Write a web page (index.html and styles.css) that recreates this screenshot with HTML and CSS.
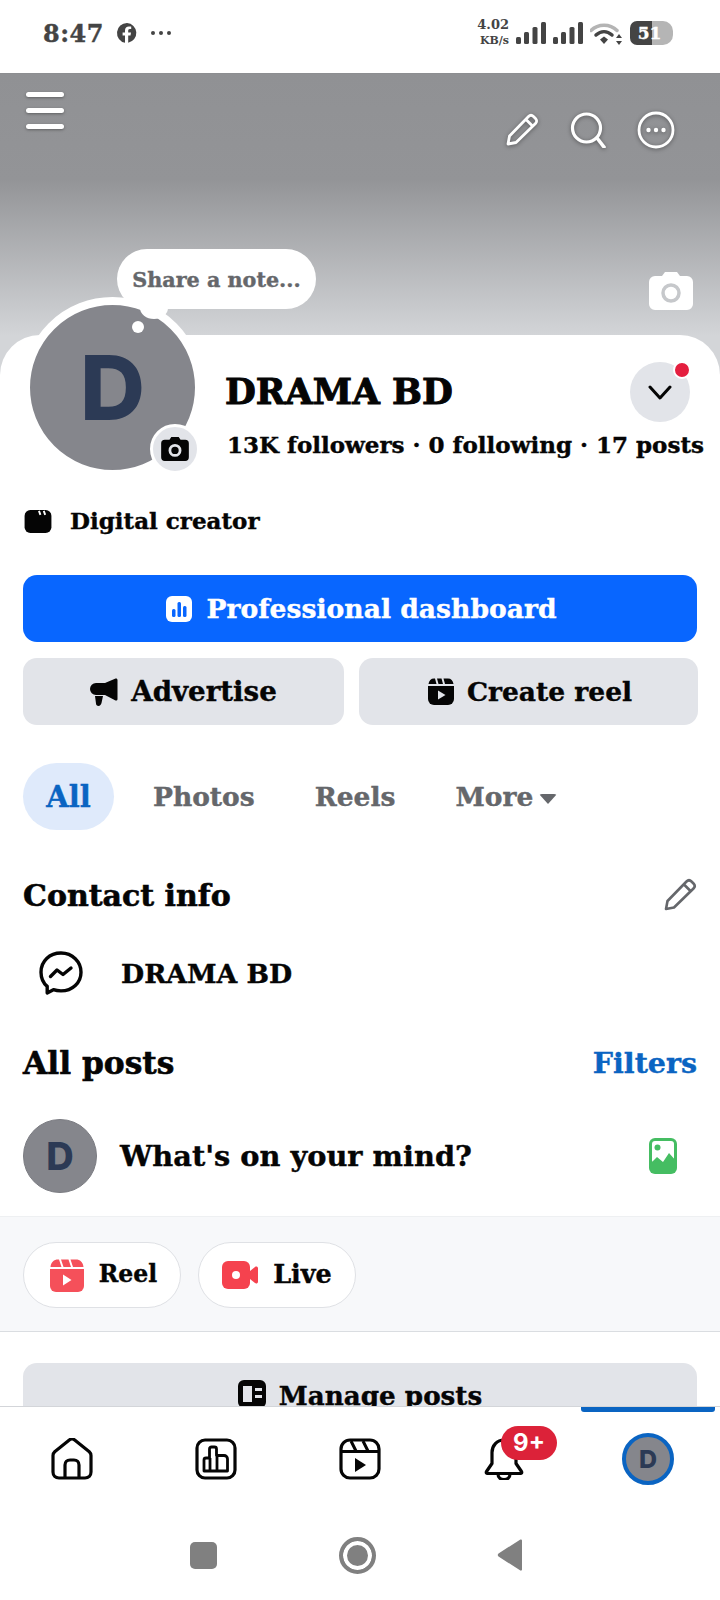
FILE: index.html
```html
<!DOCTYPE html>
<html lang="en">
<head>
  <meta charset="UTF-8">
  <title>DRAMA BD</title>
  <link rel="stylesheet" href="styles.css">
</head>
<body>
  <div class="phone">

    <!-- Status bar -->
    <div class="status">
      <div class="status-left">
        <span class="clock">8:47</span>
        <svg class="fb-mini" viewBox="0 0 22 22"><path fill="#444" fill-rule="evenodd" d="M11 1a10 10 0 0 0-2 19.8V13.6H6.6v-3H9V8.400c0-2.700 1.500-4 3.900-4l2.300.2v2.500h-1.300c-1.300 0-1.700.8-1.700 1.600v1.900h2.800l-.5 3h-2.300v7.200A10 10 0 0 0 11 1z"/></svg>
        <span class="status-dots"><i></i><i></i><i></i></span>
      </div>
      <div class="status-right">
        <div class="speed"><span>4.02</span><span class="speed-unit">KB/s</span></div>
        <svg class="signal" viewBox="0 0 30 24"><g fill="#444"><rect x="0" y="16" width="5" height="7" rx="1.500"/><rect x="8" y="11" width="5" height="12" rx="1.500"/><rect x="16.500" y="6" width="5" height="17" rx="1.500"/><rect x="25" y="1" width="5" height="22" rx="1.500"/></g></svg>
        <svg class="signal" viewBox="0 0 30 24"><g fill="#444"><rect x="0" y="16" width="5" height="7" rx="1.500"/><rect x="8" y="11" width="5" height="12" rx="1.500"/><rect x="16.500" y="6" width="5" height="17" rx="1.500"/><rect x="25" y="1" width="5" height="22" rx="1.500"/></g></svg>
        <svg class="wifi" viewBox="0 0 32 24">
          <path d="M1 9.500C8 2.500 20 2.500 27 9.500" fill="none" stroke="#b4b4b4" stroke-width="3.500" stroke-linecap="round"/>
          <path d="M6 14c5-4.500 11-4.500 16 0" fill="none" stroke="#444" stroke-width="3.500" stroke-linecap="round"/>
          <path d="M10 18.500l4-3 4 3-4 4.500z" fill="#444"/>
          <path d="M29 13l3 4h-6zM29 24l-3-4h6z" fill="#444"/>
        </svg>
        <div class="battery"><span class="battery-text">51</span></div>
      </div>
    </div>

    <div class="scroll">
      <!-- Cover -->
      <div class="cover">
        <div class="cover-bar">
          <div class="burger"><i></i><i></i><i></i></div>
          <div class="cover-actions">
            <svg class="ic-pencil" viewBox="0 0 34 34"><path d="M3 31l1.500-8L23.500 3.500c1.500-1.500 3.500-1.500 5 0l2 2c1.500 1.500 1.500 3.500 0 5L11 29.500z M21 6.500l6.500 6.500" fill="none" stroke="#fff" stroke-width="2.800" stroke-linejoin="round"/></svg>
            <svg class="ic-search" viewBox="0 0 36 36"><circle cx="16.500" cy="16" r="14" fill="none" stroke="#fff" stroke-width="3.200"/><path d="M27 26l7 9" stroke="#fff" stroke-width="3.600" stroke-linecap="round"/></svg>
            <svg class="ic-more" viewBox="0 0 38 38"><circle cx="19" cy="19" r="17" fill="none" stroke="#fff" stroke-width="2.800"/><circle cx="11.500" cy="19" r="2.200" fill="#fff"/><circle cx="19" cy="19" r="2.200" fill="#fff"/><circle cx="26.500" cy="19" r="2.200" fill="#fff"/></svg>
          </div>
        </div>
        <svg class="cover-cam" viewBox="0 0 44 38"><path fill="#fff" d="M6 4h7l3-4h12l3 4h7a6 6 0 0 1 6 6v22a6 6 0 0 1-6 6H6a6 6 0 0 1-6-6V10a6 6 0 0 1 6-6z"/><circle cx="22" cy="21" r="8" fill="none" stroke="#c6c8cb" stroke-width="3.500"/></svg>
      </div>

      <div class="sheet">
        <!-- Profile head -->
        <div class="head">
          <div class="avatar-wrap">
            <div class="avatar">D</div>
            <div class="note">Share a note...</div>
            <span class="note-tail"></span>
            <span class="note-dot"></span>
            <div class="avatar-cam">
              <svg viewBox="0 0 30 26"><path fill="#050505" fill-rule="evenodd" d="M4 3h5l2-3h8l2 3h5a4 4 0 0 1 4 4v15a4 4 0 0 1-4 4H4a4 4 0 0 1-4-4V7a4 4 0 0 1 4-4zm11 4.500a7 7 0 1 0 0 14 7 7 0 0 0 0-14zm0 3a4 4 0 1 1 0 8 4 4 0 0 1 0-8z"/></svg>
            </div>
          </div>
          <div class="head-info">
            <div class="name-row">
              <h1 class="name">DRAMA BD</h1>
              <div class="drop">
                <svg viewBox="0 0 24 16"><path d="M2 2l10 11L22 2" fill="none" stroke="#050505" stroke-width="3" stroke-linecap="round" stroke-linejoin="round"/></svg>
                <span class="drop-dot"></span>
              </div>
            </div>
            <div class="stats">13K followers · 0 following · 17 posts</div>
          </div>
        </div>

        <div class="category">
          <svg viewBox="0 0 28 24"><path fill="#050505" d="M6 0h16a6 6 0 0 1 6 6v12a6 6 0 0 1-6 6H6a6 6 0 0 1-6-6V6a6 6 0 0 1 6-6z"/><path d="M15 1l1.500 4M20 1l1.500 4" stroke="#fff" stroke-width="2"/></svg>
          <span>Digital creator</span>
        </div>

        <!-- Buttons -->
        <div class="btn btn-blue">
          <svg viewBox="0 0 26 26"><rect width="26" height="26" rx="6" fill="#fff"/><g fill="#0866ff"><rect x="6" y="13" width="3.500" height="8" rx="1.500"/><rect x="11.500" y="6" width="3.500" height="15" rx="1.500"/><rect x="17" y="10" width="3.500" height="11" rx="1.500"/></g></svg>
          <span>Professional dashboard</span>
        </div>
        <div class="btn-row">
          <div class="btn btn-ad">
            <svg class="ic-horn" viewBox="0 0 28 28"><path fill="#050505" d="M27.500 2v19c0 1.500-1.300 2-2.500 1.300L15 17H6a6 6 0 0 1-6-6 6 6 0 0 1 6-6h9L25 .7c1.200-.7 2.500-.2 2.500 1.300z"/><path fill="#050505" d="M5 18h8l-1.500 7c-.3 1.500-1.500 3-3 3S6 27 6 25.500z"/></svg>
            <span>Advertise</span>
          </div>
          <div class="btn btn-reel">
            <svg class="ic-reel" viewBox="0 0 26 27"><path fill="#050505" d="M0 8h26v13a6 6 0 0 1-6 6H6a6 6 0 0 1-6-6z"/><path fill="#050505" d="M.5 6C1 2.500 3 .5 6 .5h1L8.500 6zM10.500 6L9 .5h4.500L15 6zM17 6L15.500.5H20c3 0 5 2 5.500 5.500z"/><path d="M10 12.500l7.500 4.500-7.500 4.500z" fill="#e2e4e9"/></svg>
            <span>Create reel</span>
          </div>
        </div>

        <!-- Tabs -->
        <div class="tabs">
          <span class="tab tab-on">All</span>
          <span class="tab">Photos</span>
          <span class="tab">Reels</span>
          <span class="tab">More<i class="caret"></i></span>
        </div>

        <!-- Contact -->
        <div class="sec-head contact-head">
          <h2>Contact info</h2>
          <svg class="ic-edit" viewBox="0 0 34 34"><path d="M3 31l1.500-8L23.500 3.500c1.500-1.500 3.500-1.500 5 0l2 2c1.500 1.500 1.500 3.500 0 5L11 29.500z M21 6.500l6.500 6.500" fill="none" stroke="#65676b" stroke-width="2.600" stroke-linejoin="round"/></svg>
        </div>
        <div class="contact-row">
          <svg viewBox="0 0 44 44"><path d="M22 2C10.500 2 2 10.200 2 21.200c0 5.800 2.300 10.800 6.200 14.200V42l6.200-3.300c2.300.8 4.900 1.200 7.600 1.200 11.500 0 20-8.200 20-18.700S33.500 2 22 2z" fill="none" stroke="#050505" stroke-width="3.400" stroke-linejoin="round"/><path d="M11.500 25.500l6.500-6.500 6 4.500 8-6.500" fill="none" stroke="#050505" stroke-width="3.400" stroke-linecap="round" stroke-linejoin="round"/></svg>
          <span>DRAMA BD</span>
        </div>

        <div class="sec-head posts-head">
          <h2>All posts</h2>
          <span class="filters">Filters</span>
        </div>

        <!-- Composer -->
        <div class="composer">
          <div class="avatar-sm">D</div>
          <span class="composer-text">What's on your mind?</span>
          <svg class="ic-photo" viewBox="0 0 28 36"><rect width="28" height="36" rx="6" fill="#45bd62"/><rect x="3" y="3" width="22" height="22" rx="3" fill="#fff"/><circle cx="8.500" cy="9.500" r="3" fill="#45bd62"/><path d="M0 27l8-8 6 5 6-9 8 9v6H0z" fill="#45bd62"/></svg>
        </div>

        <div class="quick">
          <div class="pill pill-reel">
            <svg class="ic-reel-red" viewBox="0 0 34 33"><path d="M0 10h34v17a6 6 0 0 1-6 6H6a6 6 0 0 1-6-6z" fill="#f5505a"/><path d="M.5 8C1 3 4 .5 8 .5h1L11.500 8zM13.500 8L11 .5h7.500L21 8zM23 8L20.500.5H26c4 0 7 2.500 7.500 7.500z" fill="#f5505a"/><path d="M13 15.500l8.500 5.500-8.500 5.500z" fill="#fff"/></svg>
            <span>Reel</span>
          </div>
          <div class="pill pill-live">
            <svg class="ic-live" viewBox="0 0 36 28"><path d="M6 0h16a6 6 0 0 1 6 6v16a6 6 0 0 1-6 6H6a6 6 0 0 1-6-6V6a6 6 0 0 1 6-6z" fill="#f5424e"/><path d="M28 10l5-4c1.200-1 3-.3 3 1.300v13.400c0 1.600-1.800 2.300-3 1.300l-5-4z" fill="#f5424e"/><circle cx="14" cy="14" r="4" fill="#fff"/></svg>
            <span>Live</span>
          </div>
        </div>

        <div class="manage-wrap">
          <div class="btn btn-manage">
            <svg viewBox="0 0 28 28"><path fill="#050505" fill-rule="evenodd" d="M6 0h16a6 6 0 0 1 6 6v16a6 6 0 0 1-6 6H6a6 6 0 0 1-6-6V6a6 6 0 0 1 6-6zm-1 6v16h9V6zm12 2v3h7V8zm0 7v3h7v-3z"/></svg>
            <span>Manage posts</span>
          </div>
        </div>
      </div>
    </div>

    <!-- Bottom nav -->
    <div class="nav">
      <span class="nav-line"></span>
      <div class="nav-tabs">
        <div class="nav-item">
          <svg viewBox="0 0 42 42"><path d="M2 17.500c0-1.500.6-2.800 1.700-3.800L18 2.200c1.700-1.400 4.300-1.400 6 0l14.300 11.500c1.100 1 1.700 2.300 1.700 3.800V34c0 3.500-2.500 6-6 6H8c-3.500 0-6-2.500-6-6z M14 40V27c0-3 2-5 5-5h4c3 0 5 2 5 5v13" fill="none" stroke="#050505" stroke-width="3.200" stroke-linejoin="round"/></svg>
        </div>
        <div class="nav-item">
          <svg viewBox="0 0 42 42"><rect x="2" y="2" width="38" height="38" rx="8" fill="none" stroke="#050505" stroke-width="3.200"/><path d="M9 33V22c0-1.200.8-2 2-2h3.500V11c0-1.200.8-2 2-2h3c1.200 0 2 .8 2 2v6.500H29c2 0 3.500 1.500 3.500 3.500v12zM15 33V20M22 33V17.500" fill="none" stroke="#050505" stroke-width="2.800" stroke-linejoin="round"/></svg>
        </div>
        <div class="nav-item">
          <svg viewBox="0 0 42 42"><rect x="2" y="2" width="38" height="38" rx="9" fill="none" stroke="#050505" stroke-width="3.200"/><path d="M2 13.500h38M12 3l5 10M24 3l5 10" fill="none" stroke="#050505" stroke-width="3"/><path d="M16 20l11 7-11 7z" fill="#050505"/></svg>
        </div>
        <div class="nav-item">
          <svg viewBox="0 0 42 42"><path d="M21 2c-7 0-12 5.500-12 12.500v11L3.500 33.500c-.6 1 0 2 1 2h33c1 0 1.600-1 1-2L33 25.500v-11C33 7.500 28 2 21 2z" fill="none" stroke="#050505" stroke-width="3.200" stroke-linejoin="round"/><path d="M15 36c0 3.500 2.500 5.500 6 5.500s6-2 6-5.500" fill="none" stroke="#050505" stroke-width="3.200"/></svg>
          <span class="badge">9+</span>
        </div>
        <div class="nav-item">
          <div class="avatar-nav">D</div>
        </div>
      </div>
      <div class="sysbar">
        <span class="sys-square"></span>
        <span class="sys-circle"></span>
        <svg class="sys-back" viewBox="0 0 26 32"><path d="M25 1.500v29c0 1-1 1.500-2 .8L1.500 17.500c-1-.7-1-2.300 0-3L23 .7c1-.7 2 0 2 .8z" fill="#808080"/></svg>
      </div>
    </div>
  </div>
</body>
</html>
```

FILE: styles.css
```css
* {
  box-sizing: border-box;
}

body {
  margin: 0;
  background: #fff;
  font-family: "DejaVu Serif", "Liberation Serif", serif;
  font-weight: 700;
  color: #050505;
  -webkit-text-stroke: 0.4px;
}

h1, h2 {
  margin: 0;
  font-weight: 700;
}

.phone {
  width: 720px;
  height: 1600px;
  display: flex;
  flex-direction: column;
  overflow: hidden;
  position: relative;
}

/* status bar */
.status {
  height: 73px;
  flex: none;
  display: flex;
  justify-content: space-between;
  align-items: center;
  padding: 0 47px 7px 43px;
  color: #444;
}

.status-left {
  display: flex;
  align-items: center;
}

.clock {
  font-size: 24px;
  letter-spacing: 0.5px;
}

.fb-mini {
  width: 22px;
  height: 22px;
  margin-left: 12px;
}

.status-dots {
  display: flex;
  gap: 4px;
  margin-left: 13px;
}

.status-dots i {
  width: 4px;
  height: 4px;
  border-radius: 50%;
  background: #444;
}

.status-right {
  display: flex;
  align-items: center;
}

.speed {
  display: flex;
  flex-direction: column;
  align-items: flex-end;
  font-size: 13px;
  line-height: 14px;
  -webkit-text-stroke: 0;
}

.speed-unit {
  font-size: 11px;
  margin-top: 2px;
}

.signal {
  width: 30px;
  height: 24px;
  margin-left: 7px;
}

.wifi {
  width: 32px;
  height: 24px;
  margin-left: 7px;
}

.battery {
  width: 43px;
  height: 24px;
  margin-left: 8px;
  border-radius: 7px 10px 10px 7px;
  background: linear-gradient(90deg, #444 0, #444 52%, #b5b5b5 52%);
  text-align: center;
}

.battery-text {
  display: block;
  color: #fff;
  font-size: 17px;
  line-height: 24px;
  margin-right: 4px;
}

.scroll {
  flex: 1;
  min-height: 0;
  overflow: hidden;
}

/* cover */
.cover {
  height: 302px;
  position: relative;
  background: linear-gradient(180deg, #909194 0, #939497 105px, #d3d5d8 262px);
  border-top: 1px solid #8d8e91;
}

.cover-bar {
  display: flex;
  justify-content: space-between;
  padding: 18px 45px 0 26px;
}

.burger {
  width: 38px;
  display: flex;
  flex-direction: column;
  gap: 11px;
}

.burger i {
  height: 5px;
  border-radius: 3px;
  background: #fff;
  box-shadow: 0 1px 3px rgba(0,0,0,0.35);
}

.cover-actions {
  display: flex;
  align-items: center;
  gap: 31px;
  margin-top: 19px;
  filter: drop-shadow(0 1px 2px rgba(0,0,0,0.4));
}

.ic-pencil {
  width: 34px;
  height: 34px;
}

.ic-search {
  width: 36px;
  height: 36px;
}

.ic-more {
  width: 38px;
  height: 38px;
}

.cover-cam {
  position: absolute;
  right: 27px;
  top: 198px;
  width: 44px;
  height: 38px;
}

/* sheet */
.sheet {
  position: relative;
  margin-top: -40px;
  background: #fff;
  border-radius: 40px 40px 0 0;
}

.head {
  display: flex;
  padding-left: 22px;
  height: 143px;
}

.avatar-wrap {
  position: relative;
  width: 181px;
  height: 181px;
  margin-top: -38px;
  flex: none;
}

.avatar {
  width: 181px;
  height: 181px;
  border: 8px solid #fff;
  border-radius: 50%;
  background: #85868c;
  color: #2c3a55;
  font-family: Inter, "Liberation Sans", sans-serif;
  font-size: 90px;
  font-weight: 800;
  -webkit-text-stroke: 0;
  display: flex;
  align-items: center;
  justify-content: center;
}

.note {
  position: absolute;
  left: 95px;
  top: -48px;
  width: 199px;
  height: 60px;
  border-radius: 30px;
  background: #fff;
  color: #65676b;
  font-size: 20.700px;
  line-height: 62px;
  text-align: center;
  white-space: nowrap;
}

.note-tail {
  position: absolute;
  left: 118px;
  top: 0;
  width: 28px;
  height: 22px;
  border-radius: 50%;
  background: #fff;
}

.note-dot {
  position: absolute;
  left: 110px;
  top: 24px;
  width: 12px;
  height: 12px;
  border-radius: 50%;
  background: #fff;
}

.avatar-cam {
  position: absolute;
  left: 128px;
  top: 127px;
  width: 50px;
  height: 50px;
  border: 3px solid #fff;
  border-radius: 50%;
  background: #e2e4e9;
  display: flex;
  align-items: center;
  justify-content: center;
}

.avatar-cam svg {
  width: 28px;
  height: 24px;
}

.head-info {
  margin-left: 22px;
  width: 495px;
  padding-top: 27px;
}

.name-row {
  display: flex;
  justify-content: space-between;
  align-items: center;
  padding-right: 30px;
}

.name {
  font-size: 35.500px;
  line-height: 60px;
  -webkit-text-stroke: 1px;
}

.drop {
  position: relative;
  width: 60px;
  height: 60px;
  border-radius: 50%;
  background: #e2e4e9;
  display: flex;
  align-items: center;
  justify-content: center;
}

.drop svg {
  width: 24px;
  height: 16px;
  margin-top: 2px;
}

.drop-dot {
  position: absolute;
  right: -1px;
  top: -1px;
  width: 18px;
  height: 18px;
  border: 2px solid #fff;
  border-radius: 50%;
  background: #e41e3f;
}

.stats {
  margin: 8px 0 0 2px;
  font-size: 23px;
  line-height: 30px;
  white-space: nowrap;
}

.category {
  display: flex;
  align-items: center;
  gap: 17px;
  padding: 32px 0 0 24px;
  font-size: 23px;
  line-height: 23px;
}

.category svg {
  width: 28px;
  height: 23px;
}

.category span {
  margin: -3px 0 0 1px;
}

/* buttons */
.btn {
  height: 67px;
  border-radius: 14px;
  background: #e2e4e9;
  display: flex;
  align-items: center;
  justify-content: center;
  font-size: 27px;
}

.btn-blue {
  margin: 42px 23px 0;
  padding-left: 3px;
  background: #0866ff;
  color: #fff;
  font-size: 26.600px;
  gap: 14px;
}

.btn-blue svg {
  width: 26px;
  height: 26px;
}

.btn-row {
  display: grid;
  grid-template-columns: 321px 339px;
  gap: 15px;
  margin: 16px 22px 0 23px;
}

.btn-row .btn {
  gap: 13px;
}

.btn-ad {
  font-size: 27.700px;
}

.btn-reel {
  font-size: 26.500px;
  padding-left: 3px;
}

.ic-horn {
  width: 28px;
  height: 28px;
}

.ic-reel {
  width: 26px;
  height: 27px;
}

/* tabs */
.tabs {
  display: flex;
  align-items: center;
  margin: 38px 23px 0;
  font-size: 26.500px;
  color: #65676b;
}

.tab {
  height: 67px;
  display: flex;
  align-items: center;
  margin-right: 60px;
}

.tab-on {
  width: 91px;
  justify-content: center;
  border-radius: 34px;
  background: #dfeafb;
  color: #0a64c2;
  font-size: 29px;
  margin-right: 39px;
}

.caret {
  width: 0;
  height: 0;
  margin: 4px 0 0 6px;
  border-left: 9px solid transparent;
  border-right: 9px solid transparent;
  border-top: 10px solid #65676b;
  border-radius: 3px;
}

/* sections */
.sec-head {
  display: flex;
  justify-content: space-between;
  align-items: center;
  padding: 0 23px;
}

.sec-head h2 {
  font-size: 30px;
  -webkit-text-stroke: 0.6px;
}

.contact-head {
  height: 40px;
  margin-top: 45px;
}

.ic-edit {
  width: 34px;
  height: 34px;
}

.contact-row {
  display: flex;
  align-items: center;
  gap: 38px;
  padding-left: 39px;
  margin-top: 36px;
  height: 44px;
  font-size: 26.700px;
}

.contact-row svg {
  width: 44px;
  height: 44px;
}

.posts-head {
  height: 40px;
  margin-top: 48px;
}

.posts-head h2 {
  font-size: 31.300px;
}

.filters {
  color: #0a64c2;
  font-size: 28.500px;
}

.composer {
  display: flex;
  align-items: center;
  padding: 0 43px 0 23px;
  margin-top: 36px;
  height: 73px;
}

.avatar-sm {
  width: 74px;
  height: 74px;
  border-radius: 50%;
  background: #85868c;
  border: 1px solid #7b7c82;
  color: #2c3a55;
  font-family: Inter, "Liberation Sans", sans-serif;
  font-size: 38px;
  font-weight: 800;
  -webkit-text-stroke: 0;
  display: flex;
  align-items: center;
  justify-content: center;
  flex: none;
}

.composer-text {
  flex: 1;
  margin-left: 23px;
  font-size: 28.800px;
  white-space: nowrap;
}

.ic-photo {
  width: 28px;
  height: 36px;
}

.quick {
  display: flex;
  gap: 17px;
  height: 116px;
  margin-top: 24px;
  padding: 25px 23px 0;
  background: #f7f8fa;
  border-top: 1px solid #eef0f2;
  border-bottom: 1px solid #dadde1;
}

.pill {
  width: 158px;
  height: 66px;
  border: 1.500px solid #dfe1e5;
  border-radius: 33px;
  background: #fff;
  display: flex;
  align-items: center;
  justify-content: center;
  font-size: 24px;
}

.pill span {
  margin-bottom: 2px;
}

.pill-reel {
  gap: 15px;
  padding-left: 3px;
  font-size: 23.500px;
}

.pill-live {
  gap: 15px;
  font-size: 25.500px;
}

.ic-reel-red {
  width: 34px;
  height: 33px;
}

.ic-live {
  width: 36px;
  height: 28px;
}

.manage-wrap {
  padding: 31px 23px 0;
}

.btn-manage {
  gap: 13px;
  align-items: flex-start;
  padding-top: 17px;
  font-size: 26.200px;
}

.btn-manage svg {
  width: 28px;
  height: 28px;
}

/* bottom nav */
.nav {
  height: 194px;
  flex: none;
  position: relative;
  background: #fff;
  border-top: 1px solid #d3d5d9;
}

.nav-line {
  position: absolute;
  left: 581px;
  top: 0;
  width: 134px;
  height: 5px;
  border-radius: 0 0 3px 3px;
  background: #0a64c2;
}

.nav-tabs {
  display: grid;
  grid-template-columns: repeat(5, 144px);
  height: 103px;
}

.nav-item {
  position: relative;
  display: flex;
  align-items: center;
  justify-content: center;
}

.nav-item svg {
  width: 42px;
  height: 42px;
}

.badge {
  position: absolute;
  left: 69px;
  top: 19px;
  width: 56px;
  height: 34px;
  border-radius: 17px;
  background: #dc2239;
  color: #fff;
  font-family: Inter, "Liberation Sans", sans-serif;
  font-size: 24px;
  line-height: 33px;
  text-align: center;
  -webkit-text-stroke: 0;
}

.avatar-nav {
  width: 52px;
  height: 52px;
  border: 4px solid #0a64c2;
  border-radius: 50%;
  background: #85868c;
  color: #2c3a55;
  font-family: Inter, "Liberation Sans", sans-serif;
  font-size: 25px;
  font-weight: 800;
  -webkit-text-stroke: 0;
  display: flex;
  align-items: center;
  justify-content: center;
}

.sysbar {
  display: flex;
  align-items: center;
  padding-left: 190px;
  height: 60px;
  margin-top: 15px;
}

.sys-square {
  width: 27px;
  height: 27px;
  border-radius: 5px;
  background: #808080;
}

.sys-circle {
  width: 37px;
  height: 37px;
  margin-left: 122px;
  border: 4px solid #808080;
  border-radius: 50%;
  background: #808080;
  box-shadow: inset 0 0 0 4px #fff;
}

.sys-back {
  width: 26px;
  height: 32px;
  margin-left: 121px;
}
```
